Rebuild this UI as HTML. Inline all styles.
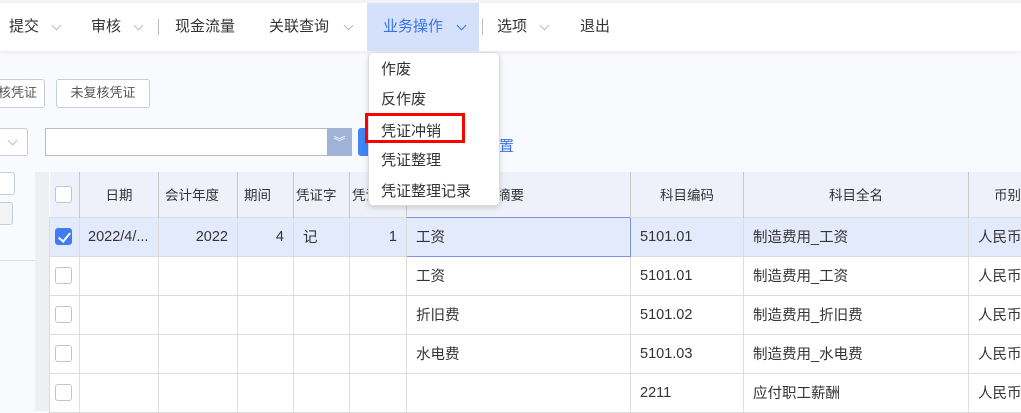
<!DOCTYPE html>
<html><head><meta charset="utf-8"><style>
*{margin:0;padding:0;box-sizing:border-box}
body{width:1021px;height:411px;overflow:hidden;background:#f9fafd;font-family:"Liberation Sans","Noto Sans CJK SC",sans-serif;font-size:14px;color:#333;position:relative}
.a{position:absolute}
.nav{left:0;top:3px;width:1021px;height:48px;background:#fff;box-shadow:0 2px 4px rgba(0,0,0,.05)}
.ni{top:15px;font-size:15px;color:#333}
.chev{width:7px;height:7px;border-right:1.3px solid #b8bcc6;border-bottom:1.3px solid #b8bcc6;transform:rotate(45deg)}
.sep{width:1px;height:16px;background:#bbb;top:19px}
.btn{border:1px solid #c6cdd8;border-radius:3px;background:#fff;font-size:13px;color:#555;text-align:center;line-height:26px}
table{border-collapse:collapse;position:absolute;left:49px;top:172px;table-layout:fixed;background:#fff;width:1000px}
td{border:1px solid #dcdcdc;height:39px;font-size:14.5px;padding:0 9px;white-space:nowrap;overflow:hidden}
tr.h td{background:#eef1f9;height:45px;border:none;border-left:1px solid #c8c8c8;background-clip:padding-box;font-size:13.5px}
tr.h td:first-child{border-left:none}
tr.s td{background:#e3eafc}
.cb{display:inline-block;width:17px;height:17px;border:1px solid #b8c6d8;border-radius:3px;background:#fff;vertical-align:middle}
.cb.on{background:#3f7cf4;border-color:#3f7cf4;position:relative}
.cb.on:after{content:"";position:absolute;left:5px;top:1px;width:5px;height:10px;border-right:2px solid #fff;border-bottom:2px solid #fff;transform:rotate(40deg)}
.menu{left:368px;top:52px;width:132px;height:154px;background:#fff;border:1px solid #ddd;border-radius:5px;box-shadow:0 2px 6px rgba(0,0,0,.15)}
.mi{left:12px;font-size:15px;color:#333}
</style></head><body>
<div class="a" style="left:0;top:0;width:1021px;height:3px;background:#f2f3f6"></div>
<div class="a nav"></div>
<div class="a" style="left:367px;top:3px;width:112px;height:48px;background:#d5e1fb"></div>
<div class="a ni" style="left:9px">提交</div><div class="a chev" style="left:53px;top:22px"></div>
<div class="a ni" style="left:91px">审核</div><div class="a chev" style="left:135px;top:22px"></div>
<div class="a sep" style="left:158px"></div>
<div class="a ni" style="left:175px">现金流量</div>
<div class="a ni" style="left:269px">关联查询</div><div class="a chev" style="left:345px;top:22px"></div>
<div class="a ni" style="left:383px;color:#3a73e8">业务操作</div><div class="a chev" style="left:458px;top:22px;border-color:#3a73e8"></div>
<div class="a sep" style="left:482px"></div>
<div class="a ni" style="left:497px">选项</div><div class="a chev" style="left:541px;top:22px"></div>
<div class="a ni" style="left:580px">退出</div>

<div class="a btn" style="left:-10px;top:79px;width:55px;height:29px">核凭证</div>
<div class="a btn" style="left:56px;top:79px;width:94px;height:29px">未复核凭证</div>
<div class="a btn" style="left:-10px;top:128px;width:38px;height:28px"></div>
<div class="a chev" style="left:9px;top:137px"></div>
<div class="a" style="left:45px;top:128px;width:283px;height:28px;border:1px solid #b8bcc4;background:#fff"></div>
<div class="a" style="left:327px;top:128px;width:25px;height:28px;background:#9fb3d6;color:#fff;text-align:center;font-size:12px;line-height:28px">︾</div>
<div class="a" style="left:358px;top:128px;width:12px;height:28px;background:#3f86f6;border-radius:3px 0 0 3px"></div>
<div class="a" style="left:499px;top:135px;color:#3a73e8;font-size:15px">置</div>

<div class="a btn" style="left:-10px;top:172px;width:25px;height:23px"></div>
<div class="a btn" style="left:-10px;top:202px;width:23px;height:23px;background:#f3f3f3"></div>
<div class="a" style="left:0;top:260px;width:35px;height:1px;background:#ddd"></div>
<div class="a" style="left:35px;top:172px;width:14px;height:239px;background:#eeeff1"></div>

<table>
<colgroup><col style="width:30px"><col style="width:79px"><col style="width:79px"><col style="width:56px"><col style="width:56px"><col style="width:57px"><col style="width:224px"><col style="width:113px"><col style="width:225px"><col style="width:81px"></colgroup>
<tr class="h"><td style="padding:0 5px"><span class="cb"></span></td><td style="text-align:center">日期</td><td style="padding-left:6px">会计年度</td><td style="padding-left:6px">期间</td><td style="padding-left:2px">凭证字</td><td style="padding-left:2px">凭证号</td><td style="padding-left:90px">摘要</td><td style="text-align:center">科目编码</td><td style="text-align:center">科目全名</td><td style="padding-left:25px">币别</td></tr>
<tr class="s"><td style="padding:0 5px"><span class="cb on"></span></td><td style="padding-left:8px">2022/4/...</td><td style="text-align:right">2022</td><td style="text-align:right">4</td><td>记</td><td style="text-align:right">1</td><td style="border:1.5px solid #7b93e0;background:#e3eafc">工资</td><td>5101.01</td><td>制造费用_工资</td><td>人民币</td></tr>
<tr><td style="padding:0 5px"><span class="cb"></span></td><td></td><td></td><td></td><td></td><td></td><td>工资</td><td>5101.01</td><td>制造费用_工资</td><td>人民币</td></tr>
<tr><td style="padding:0 5px"><span class="cb"></span></td><td></td><td></td><td></td><td></td><td></td><td>折旧费</td><td>5101.02</td><td>制造费用_折旧费</td><td>人民币</td></tr>
<tr><td style="padding:0 5px"><span class="cb"></span></td><td></td><td></td><td></td><td></td><td></td><td>水电费</td><td>5101.03</td><td>制造费用_水电费</td><td>人民币</td></tr>
<tr><td style="padding:0 5px"><span class="cb"></span></td><td></td><td></td><td></td><td></td><td></td><td></td><td>2211</td><td>应付职工薪酬</td><td>人民币</td></tr>
</table>

<div class="a menu">
<div class="a mi" style="top:5px">作废</div>
<div class="a mi" style="top:35px">反作废</div>
<div class="a mi" style="top:67px">凭证冲销</div>
<div class="a mi" style="top:96px">凭证整理</div>
<div class="a mi" style="top:127px">凭证整理记录</div>
</div>
<div class="a" style="left:365px;top:113px;width:100px;height:30px;border:3px solid #f00"></div>
</body></html>
